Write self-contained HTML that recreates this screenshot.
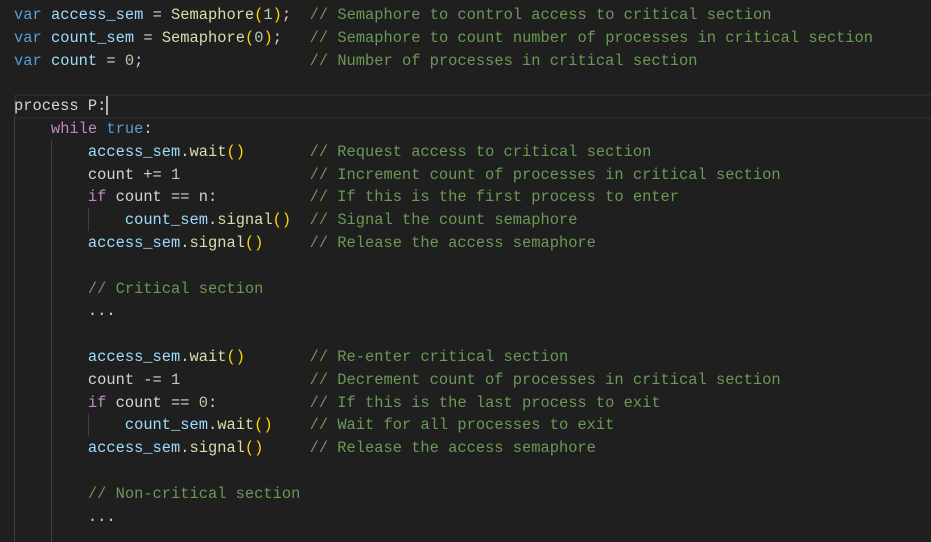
<!DOCTYPE html>
<html><head><style>
html,body{margin:0;padding:0;background:#1f1f1f;width:931px;height:542px;overflow:hidden}
pre{position:absolute;left:14px;top:4px;margin:0;font-family:"Liberation Mono",monospace;font-size:15.4px;line-height:22.8px;color:#d4d4d4}
.k{color:#569cd6}.c{color:#c586c0}.v{color:#9cdcfe}.f{color:#dcdcaa}.n{color:#b5cea8}.g{color:#6a9955}.p{color:#ffd700}
.guide{position:absolute;width:1px;background:#404040}
.cur{position:absolute;left:14px;right:0;top:94px;height:21px;border:2px solid #282828;border-right:none}
.caret{position:absolute;left:106px;top:96px;width:2px;height:19px;background:#aeafad}
</style></head><body>
<div class="cur"></div><div class="caret"></div>
<div class="guide" style="left:14px;top:117px;height:425px"></div>
<div class="guide" style="left:51px;top:140px;height:402px"></div>
<div class="guide" style="left:88px;top:208px;height:23px"></div>
<div class="guide" style="left:88px;top:413px;height:23px"></div>
<pre><span class="k">var</span> <span class="v">access_sem</span> = <span class="f">Semaphore</span><span class="p">(</span><span class="n">1</span><span class="p">)</span>;  <span class="g">// Semaphore to control access to critical section</span>
<span class="k">var</span> <span class="v">count_sem</span> = <span class="f">Semaphore</span><span class="p">(</span><span class="n">0</span><span class="p">)</span>;   <span class="g">// Semaphore to count number of processes in critical section</span>
<span class="k">var</span> <span class="v">count</span> = <span class="n">0</span>;                  <span class="g">// Number of processes in critical section</span>

process P:
    <span class="c">while</span> <span class="k">true</span>:
        <span class="v">access_sem</span>.<span class="f">wait</span><span class="p">()</span>       <span class="g">// Request access to critical section</span>
        count += <span class="n">1</span>              <span class="g">// Increment count of processes in critical section</span>
        <span class="c">if</span> count == n:          <span class="g">// If this is the first process to enter</span>
            <span class="v">count_sem</span>.<span class="f">signal</span><span class="p">()</span>  <span class="g">// Signal the count semaphore</span>
        <span class="v">access_sem</span>.<span class="f">signal</span><span class="p">()</span>     <span class="g">// Release the access semaphore</span>

        <span class="g">// Critical section</span>
        ...

        <span class="v">access_sem</span>.<span class="f">wait</span><span class="p">()</span>       <span class="g">// Re-enter critical section</span>
        count -= <span class="n">1</span>              <span class="g">// Decrement count of processes in critical section</span>
        <span class="c">if</span> count == <span class="n">0</span>:          <span class="g">// If this is the last process to exit</span>
            <span class="v">count_sem</span>.<span class="f">wait</span><span class="p">()</span>    <span class="g">// Wait for all processes to exit</span>
        <span class="v">access_sem</span>.<span class="f">signal</span><span class="p">()</span>     <span class="g">// Release the access semaphore</span>

        <span class="g">// Non-critical section</span>
        ...</pre>
</body></html>
